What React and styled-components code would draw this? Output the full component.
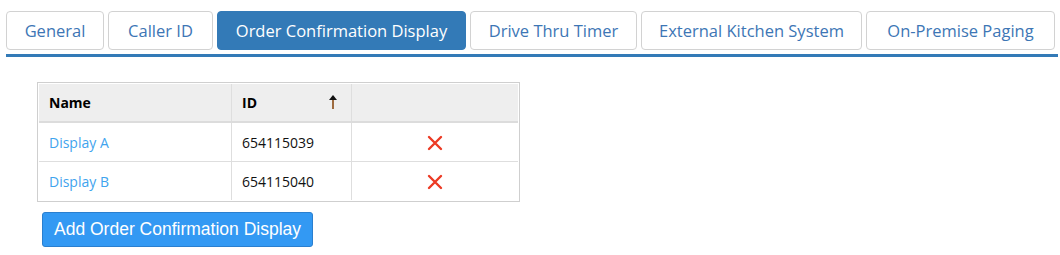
import React from 'react'
import styled, { createGlobalStyle } from 'styled-components'

const GlobalStyle = createGlobalStyle`
  body {
    margin: 0;
    background: #fff;
    font-family: "Open Sans", "Noto Sans", sans-serif;
  }
`

const Page = styled.div`
  width: 1060px;
  height: 255px;
  padding: 11px 2px 0 6px;
  box-sizing: border-box;
`

const Tabs = styled.div`
  display: flex;
  gap: 4px;
  padding-bottom: 4px;
  border-bottom: 3px solid #337ab7;
`

const Tab = styled.div`
  width: ${p => p.$w}px;
  height: 39px;
  box-sizing: border-box;
  display: flex;
  align-items: center;
  justify-content: center;
  border: 1px solid ${p => (p.$active ? '#337ab7' : '#d2d2d2')};
  border-radius: 4px;
  background: ${p => (p.$active ? '#337ab7' : '#fff')};
  color: ${p => (p.$active ? '#fff' : '#3d76b5')};
  font-size: 16.5px;
  white-space: nowrap;
`

const Content = styled.div`
  padding: 25px 0 0 31px;
`

const TableWrap = styled.div`
  width: 483px;
  border: 1px solid #cfcfcf;
  padding: 1px;
  box-sizing: border-box;
`

const Table = styled.table`
  width: 100%;
  border-collapse: collapse;
  font-size: 14px;
  font-family: "Open Sans", "Noto Sans", sans-serif;
`

const Th = styled.th`
  height: 37px;
  background: #eee;
  text-align: left;
  padding: 0 10px;
  font-weight: bold;
  color: #000;
  border-left: 1px solid #dedede;
  border-bottom: 2px solid #dcdcdc;
  width: ${p => p.$w || 'auto'};
  position: relative;
  &:first-child { border-left: none; }
`

const Td = styled.td`
  height: 38px;
  padding: 0 10px;
  border-left: 1px solid #dedede;
  border-top: 1px solid #dedede;
  color: ${p => (p.$link ? '#3fa4ee' : '#111')};
  text-align: ${p => (p.$center ? 'center' : 'left')};
  &:first-child { border-left: none; }
  tr:first-child > & { border-top: none; }
`

const SortArrow = styled.svg`
  position: absolute;
  right: 13px;
  top: 10px;
`

const RemoveIcon = styled.svg`
  display: block;
  margin: 2px auto 0;
`

const AddButton = styled.button`
  margin: 10px 0 0 5px;
  height: 35px;
  padding: 0 11px;
  background: #3399f3;
  border: 1px solid #2a7fcf;
  border-radius: 3px;
  color: #fff;
  font-family: "Liberation Sans", Arial, sans-serif;
  font-size: 17.5px;
  cursor: pointer;
`

const tabs = [
  { label: 'General', w: 98 },
  { label: 'Caller ID', w: 105 },
  { label: 'Order Confirmation Display', w: 249, active: true },
  { label: 'Drive Thru Timer', w: 167 },
  { label: 'External Kitchen System', w: 221 },
  { label: 'On-Premise Paging', w: 189 },
]

const rows = [
  { name: 'Display A', id: '654115039' },
  { name: 'Display B', id: '654115040' },
]

const Cross = () => (
  <RemoveIcon width="16" height="16" viewBox="0 0 16 16">
    <path d="M2 2 L14 14 M14 2 L2 14" stroke="#ec3a24" strokeWidth="2.4" strokeLinecap="round" />
  </RemoveIcon>
)

export default function App() {
  return (
    <Page>
      <GlobalStyle />
      <Tabs>
        {tabs.map(t => (
          <Tab key={t.label} $active={t.active} $w={t.w}>{t.label}</Tab>
        ))}
      </Tabs>
      <Content>
        <TableWrap>
          <Table>
            <thead>
              <tr>
                <Th $w="172px">Name</Th>
                <Th $w="99px">
                  ID
                  <SortArrow width="10" height="16" viewBox="0 0 10 16">
                    <path d="M5 5 L5 15" stroke="#8a4a12" strokeWidth="1.6" />
                    <path d="M1 6 L5 1 L9 6 Z" fill="#111" />
                  </SortArrow>
                </Th>
                <Th />
              </tr>
            </thead>
            <tbody>
              {rows.map(r => (
                <tr key={r.id}>
                  <Td $link>{r.name}</Td>
                  <Td>{r.id}</Td>
                  <Td $center><Cross /></Td>
                </tr>
              ))}
            </tbody>
          </Table>
        </TableWrap>
        <AddButton>Add Order Confirmation Display</AddButton>
      </Content>
    </Page>
  )
}
